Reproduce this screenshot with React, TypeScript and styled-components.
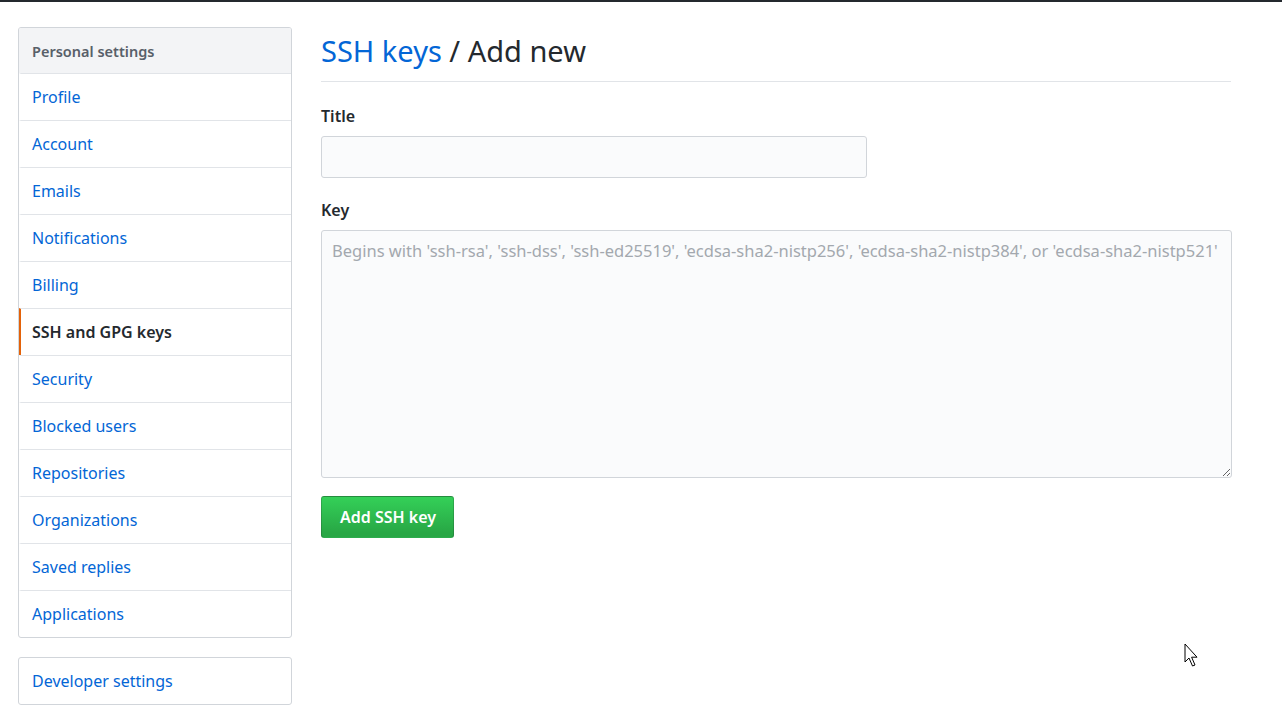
import React from 'react';
import styled, { createGlobalStyle } from 'styled-components';

const GlobalStyle = createGlobalStyle`
  html, body {
    margin: 0;
    padding: 0;
    background: #fff;
  }
  body {
    font-family: "Noto Sans", "Open Sans", "Liberation Sans", sans-serif;
    color: #24292e;
  }
`;

const TopBar = styled.div`
  height: 2px;
  background: #24292e;
`;

const Layout = styled.div`
  display: flex;
  align-items: flex-start;
  gap: 29px;
  padding: 25px 0 0 18px;
`;

const SideColumn = styled.div`
  width: 274px;
  display: flex;
  flex-direction: column;
  gap: 19px;
  flex-shrink: 0;
`;

const Menu = styled.nav`
  border: 1px solid #d1d5da;
  border-radius: 3px;
  overflow: hidden;
`;

const MenuHeading = styled.div`
  height: 45px;
  display: flex;
  align-items: center;
  padding: 0 13px;
  background: #f3f4f6;
  color: #586069;
  font-size: 14.5px;
  font-weight: 600;
`;

const MenuItem = styled.a<{ $active?: boolean; $first?: boolean }>`
  display: flex;
  align-items: center;
  height: 46px;
  padding: 0 13px 0 11px;
  border-top: ${p => (p.$first ? 'none' : '1px solid #e1e4e8')};
  border-left: 2px solid ${p => (p.$active ? '#e36209' : 'transparent')};
  font-size: 16px;
  color: ${p => (p.$active ? '#24292e' : '#0366d6')};
  font-weight: ${p => (p.$active ? 600 : 400)};
  text-decoration: none;
  cursor: pointer;
`;

const Main = styled.main`
  width: 910px;
  padding-top: 3px;
`;

const Subhead = styled.div`
  border-bottom: 1px solid #e1e4e8;
  padding-bottom: 9px;
  margin-bottom: 22px;
`;

const Heading = styled.h2`
  margin: 0;
  font-size: 29px;
  line-height: 42px;
  font-weight: 400;
  color: #24292e;
`;

const HeadLink = styled.a`
  color: #0366d6;
  text-decoration: none;
`;

const Field = styled.div<{ $gap: number }>`
  margin-bottom: ${p => p.$gap}px;
`;

const Label = styled.label`
  display: block;
  font-size: 16px;
  line-height: 24px;
  font-weight: 600;
  margin-bottom: 8px;
`;

const TextInput = styled.input`
  box-sizing: border-box;
  width: 546px;
  height: 42px;
  padding: 6px 10px;
  background: #fafbfc;
  border: 1px solid #d1d5da;
  border-radius: 3px;
  font-family: inherit;
  font-size: 16px;
  outline: none;
`;

const KeyArea = styled.textarea`
  display: block;
  box-sizing: border-box;
  width: 911px;
  height: 248px;
  padding: 8px 10px;
  background: #fafbfc;
  border: 1px solid #d1d5da;
  border-radius: 3px;
  font-family: inherit;
  font-size: 16.5px;
  line-height: 24px;
  outline: none;
  &::placeholder {
    color: #a3a8ae;
  }
`;

const PrimaryButton = styled.button`
  height: 42px;
  padding: 0 17px 0 18px;
  border: 1px solid rgba(27, 31, 35, 0.2);
  border-radius: 3px;
  background: linear-gradient(-180deg, #34d058 0%, #28a745 90%);
  color: #fff;
  font-family: inherit;
  font-size: 16px;
  font-weight: 600;
  cursor: pointer;
`;

const Pointer = styled.svg`
  position: fixed;
  left: 1184px;
  top: 643px;
  pointer-events: none;
`;

const items = [
  'Profile',
  'Account',
  'Emails',
  'Notifications',
  'Billing',
  'SSH and GPG keys',
  'Security',
  'Blocked users',
  'Repositories',
  'Organizations',
  'Saved replies',
  'Applications',
];

export default function App(): React.ReactElement {
  return (
    <>
      <GlobalStyle />
      <TopBar />
      <Layout>
        <SideColumn>
          <Menu>
            <MenuHeading>Personal settings</MenuHeading>
            {items.map(name => (
              <MenuItem key={name} $active={name === 'SSH and GPG keys'}>
                {name}
              </MenuItem>
            ))}
          </Menu>
          <Menu>
            <MenuItem $first>Developer settings</MenuItem>
          </Menu>
        </SideColumn>
        <Main>
          <Subhead>
            <Heading>
              <HeadLink>SSH keys</HeadLink> / Add new
            </Heading>
          </Subhead>
          <Field $gap={20}>
            <Label>Title</Label>
            <TextInput type="text" />
          </Field>
          <Field $gap={18}>
            <Label>Key</Label>
            <KeyArea placeholder="Begins with 'ssh-rsa', 'ssh-dss', 'ssh-ed25519', 'ecdsa-sha2-nistp256', 'ecdsa-sha2-nistp384', or 'ecdsa-sha2-nistp521'" />
          </Field>
          <PrimaryButton>Add SSH key</PrimaryButton>
        </Main>
      </Layout>
      <Pointer width="18" height="26" viewBox="0 0 18 26">
        <path d="M1 1 L1 19 L5 15 L8.5 23 L11 22 L7.6 14.2 L13 14.2 Z" fill="#fff" stroke="#000" strokeWidth="1" strokeLinejoin="miter" />
      </Pointer>
    </>
  );
}
